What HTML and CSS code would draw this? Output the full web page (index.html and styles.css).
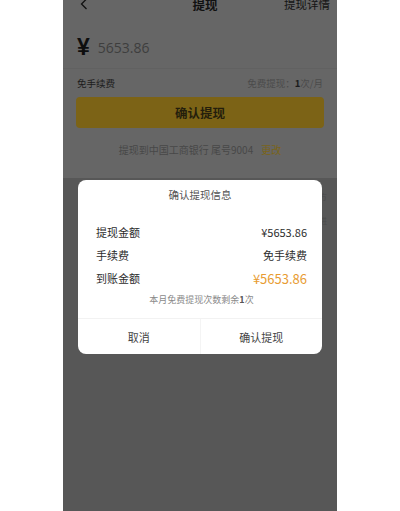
FILE: index.html
```html
<!DOCTYPE html>
<html lang="zh">
<head>
<meta charset="utf-8">
<title>提现</title>
<link rel="stylesheet" href="styles.css">
</head>
<body>
<div class="phone">
  <section class="top">
    <header class="nav">
      <span class="back"><svg width="8" height="12" viewBox="0 0 8 12"><path d="M6.5 1 L1.5 6 L6.5 11" fill="none" stroke="#111" stroke-width="1.3"/></svg></span>
      <span class="title">提现</span>
      <span class="detail">提现详情</span>
    </header>
    <div class="amount">
      <span class="yen">¥</span>
      <span class="num">5653.86</span>
    </div>
    <div class="fee">
      <span class="fee-l">免手续费</span>
      <span class="fee-r">免费提现：<b>1</b>次/月</span>
    </div>
    <div class="btn">确认提现</div>
    <div class="bank">提现到中国工商银行 尾号9004<span class="change">更改</span></div>
  </section>
  <section class="rules">
    <p>方</p>
    <p>进</p>
  </section>
  <div class="dialog">
    <div class="d-title">确认提现信息</div>
    <div class="d-body">
      <div class="d-row"><span>提现金额</span><span>¥5653.86</span></div>
      <div class="d-row"><span>手续费</span><span>免手续费</span></div>
      <div class="d-row"><span>到账金额</span><span class="orange">¥5653.86</span></div>
      <div class="d-note">本月免费提现次数剩余<b>1</b>次</div>
    </div>
    <div class="d-btns">
      <span class="d-btn">取消</span>
      <span class="d-btn">确认提现</span>
    </div>
  </div>
</div>
</body>
</html>
```

FILE: styles.css
```css
* { box-sizing: border-box; }
html, body { margin: 0; padding: 0; background: #fff; }
body {
  font-family: "Noto Sans CJK SC", "Noto Sans", sans-serif;
  width: 400px;
  height: 511px;
  overflow: hidden;
}
.phone {
  position: relative;
  margin-left: 63px;
  width: 274px;
  height: 511px;
  overflow: hidden;
  background: #575757;
}
.top {
  background: #666;
  padding-bottom: 21px;
}
.nav {
  margin-top: -8px;
  height: 24px;
  display: grid;
  grid-template-columns: 1fr auto 1fr;
  align-items: center;
  padding: 0 7px 0 17px;
}
.back { display: flex; align-items: center; }
.title { font-size: 12.5px; font-weight: 700; color: #111; }
.detail { justify-self: end; font-size: 11.5px; color: #151515; }
.amount {
  padding: 16px 0 6px 14px;
  border-bottom: 1px solid #616161;
  display: flex;
  align-items: center;
  height: 53px;
}
.yen { font-size: 23px; font-weight: 700; color: #0e0e0e; line-height: 30px; font-family: "Liberation Sans", sans-serif; }
.num { margin-left: 8px; font-size: 14px; color: #3e3e3e; font-family: "Open Sans", sans-serif; }
.fee {
  margin-top: 7px;
  display: flex;
  justify-content: space-between;
  padding: 0 14px;
  line-height: 14px;
  font-size: 9.5px;
}
.fee-l { color: #1c1c1c; }
.fee-r { color: #4b4b4b; }
.fee-r b { color: #1c1c1c; }
.btn {
  margin: 7px 13px 0;
  height: 31px;
  border-radius: 4px;
  background: #7c6316;
  color: #241e0c;
  font-size: 12.5px;
  font-weight: 700;
  display: flex;
  align-items: center;
  justify-content: center;
}
.bank {
  margin-top: 15px;
  line-height: 14px;
  text-align: center;
  font-size: 10px;
  color: #484848;
}
.change { margin-left: 8px; color: #7a6418; }
.rules {
  padding: 7px 10px 0 15px;
}
.rules p {
  margin: 0;
  line-height: 24px;
  font-size: 8px;
  color: #4a4a4a;
  text-align: right;
}
.dialog {
  position: absolute;
  left: 15px;
  top: 180px;
  width: 244px;
  height: 174px;
  background: #fff;
  border-radius: 8px;
  display: flex;
  flex-direction: column;
}
.d-title {
  height: 30px;
  line-height: 30px;
  text-align: center;
  font-size: 10.5px;
  color: #555;
}
.d-body {
  flex: 1;
  padding: 10.5px 15px 0 18px;
}
.d-row {
  display: flex;
  justify-content: space-between;
  align-items: center;
  height: 23px;
  font-size: 11px;
  color: #2c2c2c;
}
.orange { color: #e89c32; font-size: 13px; }
.d-note {
  margin-top: 3.5px;
  line-height: 14px;
  text-align: center;
  font-size: 9px;
  color: #8a8a8a;
}
.d-note b { color: #555; }
.d-btns {
  height: 36px;
  display: flex;
  border-top: 1px solid #f2f2f2;
}
.d-btn {
  flex: 1;
  display: flex;
  align-items: center;
  justify-content: center;
  font-size: 11px;
  color: #444;
}
.d-btn + .d-btn { border-left: 1px solid #f4f4f4; }
```
